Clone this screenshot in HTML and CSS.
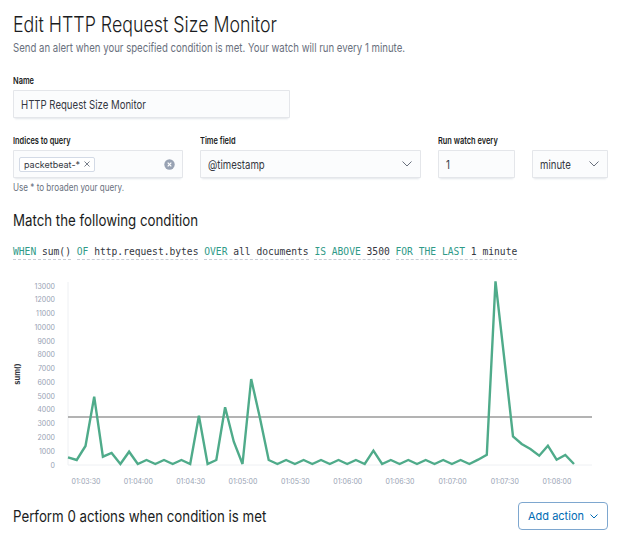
FILE: index.html
```html
<!DOCTYPE html>
<html lang="en">
<head>
<meta charset="utf-8">
<title>Edit HTTP Request Size Monitor</title>
<link rel="stylesheet" href="styles.css">
</head>
<body>
<main class="page">
  <h1 class="title">Edit HTTP Request Size Monitor</h1>
  <p class="subtitle">Send an alert when your specified condition is met. Your watch will run every 1 minute.</p>

  <div class="name-field">
    <label class="label">Name</label>
    <div class="control name-control"><span class="value">HTTP Request Size Monitor</span></div>
  </div>

  <div class="query-grid">
    <label class="label">Indices to query</label>
    <label class="label">Time field</label>
    <label class="label">Run watch every</label>
    <span class="label-spacer"></span>

    <div class="control combo">
      <span class="chip">packetbeat-*<svg class="chip-x" width="6" height="6" viewBox="0 0 6 6"><path d="M0.5 0.5 L5.5 5.5 M5.5 0.5 L0.5 5.5" stroke="#69707d" stroke-width="0.9" fill="none"/></svg></span>
      <svg class="clear" width="11" height="11" viewBox="0 0 11 11"><circle cx="5.5" cy="5.5" r="5.2" fill="#98a2b3"/><path d="M3.7 3.7 L7.3 7.3 M7.3 3.7 L3.7 7.3" stroke="#fff" stroke-width="1.2"/></svg>
    </div>
    <div class="control select"><span class="value">@timestamp</span><svg class="chev" width="10" height="6" viewBox="0 0 10 6"><path d="M0.5 0.5 L5 5 L9.5 0.5" stroke="#69707d" stroke-width="1" fill="none"/></svg></div>
    <div class="control"><span class="value">1</span></div>
    <div class="control select"><span class="value">minute</span><svg class="chev" width="10" height="6" viewBox="0 0 10 6"><path d="M0.5 0.5 L5 5 L9.5 0.5" stroke="#69707d" stroke-width="1" fill="none"/></svg></div>

    <p class="help">Use * to broaden your query.</p>
  </div>

  <h2 class="section-title">Match the following condition</h2>
  <div class="expression">
    <span class="expr"><span class="kw">WHEN</span> sum()</span>
    <span class="expr"><span class="kw">OF</span> http.request.bytes</span>
    <span class="expr"><span class="kw">OVER</span> all documents</span>
    <span class="expr"><span class="kw">IS ABOVE</span> 3500</span>
    <span class="expr"><span class="kw">FOR THE LAST</span> 1 minute</span>
  </div>

  <svg class="chart" viewBox="0 270 624 222" width="624" height="222">
    <g class="grid">
      <line x1="68" y1="283" x2="68" y2="466"/>
      <line x1="68" y1="466" x2="592" y2="466"/>
    </g>
    <g class="ytick">
      <text x="55" y="466">0</text>
      <text x="55" y="452.2">1000</text>
      <text x="55" y="438.5">2000</text>
      <text x="55" y="424.7">3000</text>
      <text x="55" y="410.9">4000</text>
      <text x="55" y="397.2">5000</text>
      <text x="55" y="383.4">6000</text>
      <text x="55" y="369.6">7000</text>
      <text x="55" y="355.8">8000</text>
      <text x="55" y="342.1">9000</text>
      <text x="55" y="328.3">10000</text>
      <text x="55" y="314.5">11000</text>
      <text x="55" y="300.8">12000</text>
      <text x="55" y="287">13000</text>
    </g>
    <text class="axis-title" x="17" y="375" transform="rotate(-90 17 375)">sum()</text>
    <g class="xtick">
      <text x="86" y="482">01:03:30</text>
      <text x="138.4" y="482">01:04:00</text>
      <text x="190.7" y="482">01:04:30</text>
      <text x="243" y="482">01:05:00</text>
      <text x="295.4" y="482">01:05:30</text>
      <text x="347.8" y="482">01:06:00</text>
      <text x="400" y="482">01:06:30</text>
      <text x="452.5" y="482">01:07:00</text>
      <text x="504.8" y="482">01:07:30</text>
      <text x="557" y="482">01:08:00</text>
    </g>
    <line class="threshold" x1="68" y1="418" x2="592" y2="418"/>
    <polyline class="series" points="68,458.3 76.7,461 85.5,447 94.2,397.7 102.9,457.7 111.6,454 120.4,465 129.1,452.7 137.8,465 146.5,461 155.3,465 164,461 172.7,465 181.4,461 190.2,465 198.9,416.7 207.6,465 216.3,461 225.1,408.3 233.8,442.7 242.5,465 251.2,380 260,419.3 268.7,461 277.4,465 286.1,461 294.9,465 303.6,461 312.3,465 321,461 329.8,465 338.5,461 347.2,465 355.9,461 364.7,465 373.4,451.7 382.1,465 390.8,461 399.6,465 408.3,461 417,465 425.7,461 434.5,465 443.2,461 451.9,465 460.6,461 469.4,465 478.1,460.7 486.8,455.7 495.5,282.3 504.3,359.8 513,437.3 521.7,445 530.4,450 539.2,456.7 547.9,446.7 556.6,460.7 565.3,456 574,465"/>
  </svg>

  <div class="actions-row">
    <h2 class="section-title">Perform 0 actions when condition is met</h2>
    <button class="add-action" type="button"><span class="btn-text">Add action</span><svg width="8" height="5" viewBox="0 0 8 5"><path d="M0.5 0.5 L4 4 L7.5 0.5" stroke="#006bb4" stroke-width="1" fill="none"/></svg></button>
  </div>
</main>
</body>
</html>
```

FILE: styles.css
```css
html, body {
  margin: 0;
  background: #ffffff;
}

body {
  font-family: Inter, "Noto Sans", "Liberation Sans", sans-serif;
  color: #343741;
  overflow: hidden;
}

.page {
  padding: 10px 16px 0 13px;
}

.title {
  margin: 0;
  font-size: 22px;
  line-height: 28px;
  font-weight: 300;
  color: #1a1c21;
  white-space: nowrap;
  transform: scaleX(0.81);
  transform-origin: 0 50%;
}

.subtitle {
  margin: 2px 0 0;
  font-size: 12px;
  line-height: 16px;
  color: #69707d;
  white-space: nowrap;
  transform: scaleX(0.8);
  transform-origin: 0 50%;
}

.label {
  display: block;
  margin-bottom: 2px;
  font-size: 9.5px;
  line-height: 14px;
  font-weight: 600;
  color: #1a1c21;
  white-space: nowrap;
  transform: scaleX(0.78);
  transform-origin: 0 50%;
}

.name-field {
  margin-top: 18px;
}

.control {
  box-sizing: border-box;
  height: 28px;
  display: flex;
  align-items: center;
  padding: 0 8px;
  background: #fbfcfd;
  box-shadow: inset 0 0 0 1px rgba(32, 43, 64, 0.1),
              0 1px 1px -1px rgba(152, 162, 179, 0.2),
              0 3px 2px -2px rgba(152, 162, 179, 0.25);
  border-radius: 1px;
  font-size: 12px;
  color: #343741;
}

.name-control {
  width: 277px;
}

.value {
  display: inline-block;
  white-space: nowrap;
  transform: scaleX(0.8);
  transform-origin: 0 50%;
}

.query-grid {
  margin-top: 16px;
  display: grid;
  grid-template-columns: 170px 221px 77px 76px;
  column-gap: 17px;
}

.combo {
  justify-content: space-between;
  padding: 0 8px 0 6px;
}

.chip {
  box-sizing: border-box;
  height: 15px;
  display: inline-flex;
  align-items: center;
  gap: 4px;
  padding: 0 4px;
  border: 1px solid #d3dae6;
  border-radius: 2px;
  background: #ffffff;
  font-size: 9px;
  color: #343741;
  white-space: nowrap;
}

.select {
  justify-content: space-between;
  padding-right: 9px;
}

.chev {
  flex: none;
}

.help {
  grid-column: 1 / -1;
  margin: 3px 0 0;
  font-size: 10px;
  line-height: 12px;
  color: #69707d;
  white-space: nowrap;
  transform: scaleX(0.81);
  transform-origin: 0 50%;
}

.section-title {
  margin: 17px 0 0;
  font-size: 16px;
  line-height: 20px;
  font-weight: 400;
  color: #1a1c21;
  white-space: nowrap;
  transform: scaleX(0.83);
  transform-origin: 0 50%;
}

.expression {
  margin-top: 15px;
  font-family: "DejaVu Sans Mono", "Liberation Mono", monospace;
  font-size: 9.65px;
  line-height: 13px;
  color: #343741;
  white-space: nowrap;
}

.expr {
  display: inline-block;
  padding-bottom: 1px;
  border-bottom: 1px dashed #c9ced6;
}

.kw {
  color: #2f9a88;
}

.chart {
  display: block;
  margin: 9px 0 0 -13px;
  width: 624px;
  height: 222px;
}

.chart .grid line {
  stroke: #eef0f3;
  stroke-width: 1;
}

.chart text {
  font-family: Inter, "Noto Sans", sans-serif;
  font-size: 7px;
  fill: #98a2b3;
  dominant-baseline: central;
}

.chart .ytick text {
  text-anchor: end;
}

.chart .xtick text {
  text-anchor: middle;
}

.chart .axis-title {
  font-size: 7.5px;
  font-weight: 700;
  fill: #343741;
  text-anchor: middle;
}

.threshold {
  stroke: #9a9a9a;
  stroke-width: 1.3;
}

.series {
  fill: none;
  stroke: #4fab8a;
  stroke-width: 2.4;
  stroke-linejoin: miter;
}

.actions-row {
  margin-top: 11px;
  display: flex;
  justify-content: space-between;
  align-items: center;
}

.actions-row .section-title {
  margin: 0;
}

.add-action {
  box-sizing: border-box;
  height: 28px;
  width: 90px;
  display: inline-flex;
  align-items: center;
  justify-content: center;
  gap: 6px;
  padding: 0 6px;
  background: #ffffff;
  border: 1px solid #7ea7cf;
  border-radius: 4px;
  font-family: Inter, "Noto Sans", sans-serif;
  font-size: 11px;
  font-weight: 400;
  color: #006bb4;
  white-space: nowrap;
}

.btn-text {
  white-space: nowrap;
}
```
